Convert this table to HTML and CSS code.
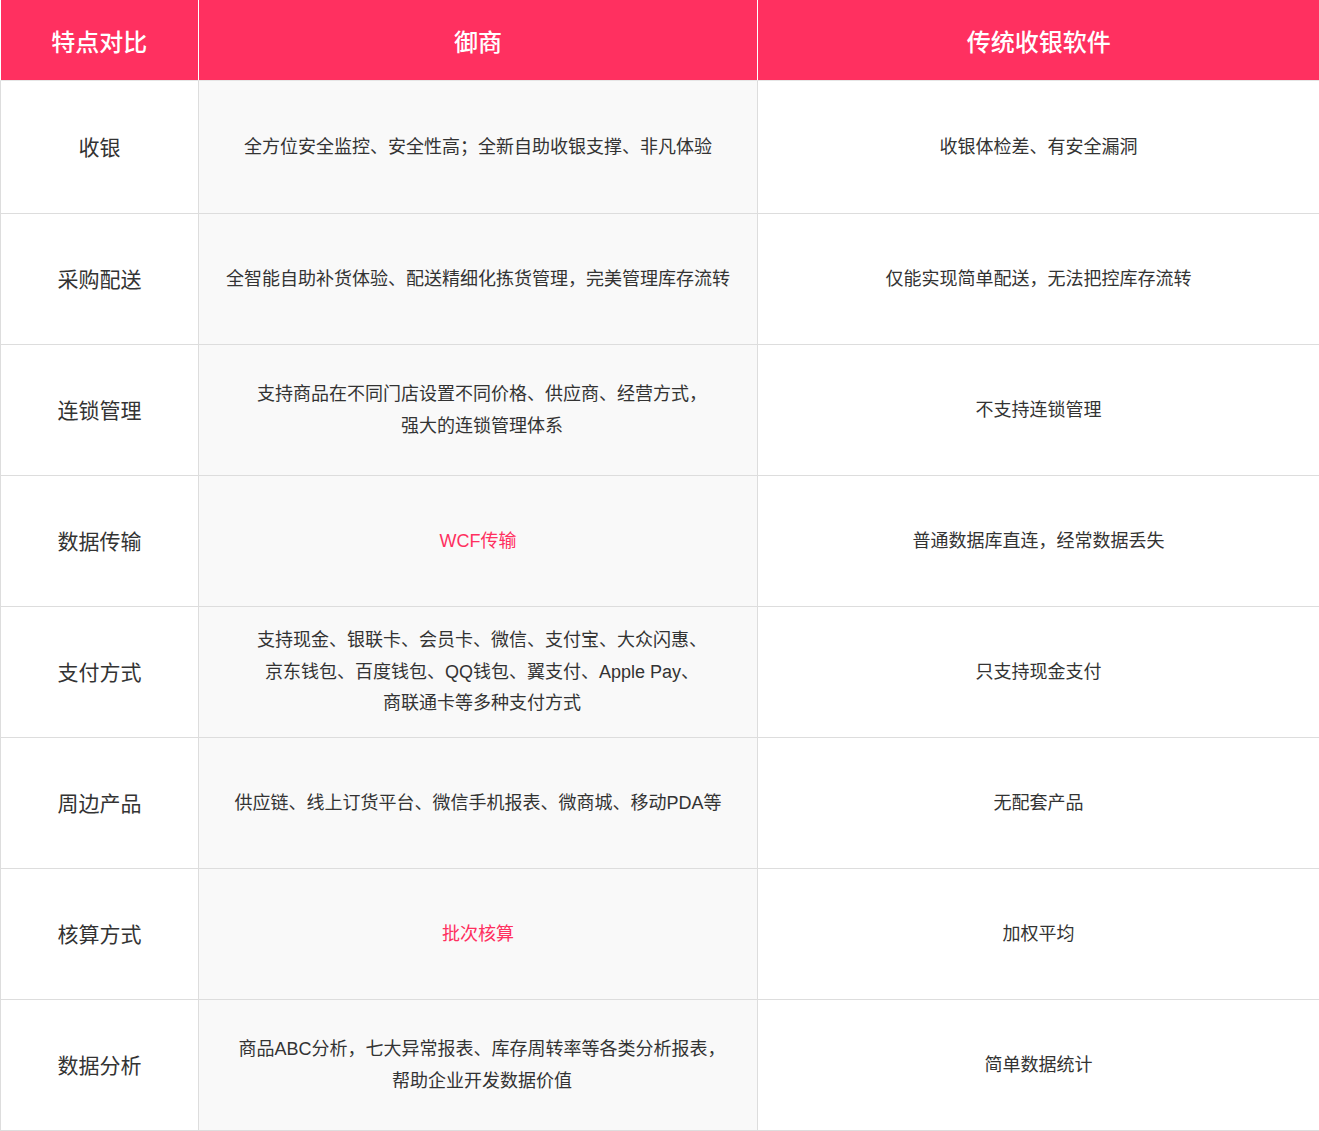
FILE: index.html
```html
<!DOCTYPE html>
<html lang="zh-CN">
<head>
<meta charset="utf-8">
<title>特点对比</title>
<link rel="stylesheet" href="styles.css">
</head>
<body>
<table class="compare">
  <colgroup>
    <col class="col-feature">
    <col class="col-ours">
    <col class="col-other">
  </colgroup>
  <thead>
    <tr>
      <th>特点对比</th>
      <th>御商</th>
      <th>传统收银软件</th>
    </tr>
  </thead>
  <tbody>
    <tr class="first">
      <td class="feature">收银</td>
      <td class="ours">全方位安全监控、安全性高；全新自助收银支撑、非凡体验</td>
      <td class="other">收银体检差、有安全漏洞</td>
    </tr>
    <tr>
      <td class="feature">采购配送</td>
      <td class="ours">全智能自助补货体验、配送精细化拣货管理，完美管理库存流转</td>
      <td class="other">仅能实现简单配送，无法把控库存流转</td>
    </tr>
    <tr>
      <td class="feature">连锁管理</td>
      <td class="ours multi">支持商品在不同门店设置不同价格、供应商、经营方式，<br>强大的连锁管理体系</td>
      <td class="other">不支持连锁管理</td>
    </tr>
    <tr>
      <td class="feature">数据传输</td>
      <td class="ours highlight">WCF传输</td>
      <td class="other">普通数据库直连，经常数据丢失</td>
    </tr>
    <tr>
      <td class="feature">支付方式</td>
      <td class="ours multi">支持现金、银联卡、会员卡、微信、支付宝、大众闪惠、<br>京东钱包、百度钱包、QQ钱包、翼支付、Apple Pay、<br>商联通卡等多种支付方式</td>
      <td class="other">只支持现金支付</td>
    </tr>
    <tr>
      <td class="feature">周边产品</td>
      <td class="ours">供应链、线上订货平台、微信手机报表、微商城、移动PDA等</td>
      <td class="other">无配套产品</td>
    </tr>
    <tr>
      <td class="feature">核算方式</td>
      <td class="ours highlight">批次核算</td>
      <td class="other">加权平均</td>
    </tr>
    <tr>
      <td class="feature">数据分析</td>
      <td class="ours multi">商品ABC分析，七大异常报表、库存周转率等各类分析报表，<br>帮助企业开发数据价值</td>
      <td class="other">简单数据统计</td>
    </tr>
  </tbody>
</table>
</body>
</html>
```

FILE: styles.css
```css
html, body {
  margin: 0;
  padding: 0;
  background: #ffffff;
}

body {
  font-family: "Liberation Sans", "Noto Sans CJK SC", sans-serif;
  color: #333333;
}

.compare {
  width: 1319px;
  border-collapse: collapse;
  table-layout: fixed;
}

.col-feature { width: 198px; }
.col-ours { width: 559px; }
.col-other { width: 562px; }

.compare th {
  height: 80px;
  padding: 0;
  background: #ff3060;
  color: #ffffff;
  font-size: 24px;
  font-weight: 500;
  text-align: center;
  vertical-align: middle;
  border-left: 1px solid #ffffff;
  border-bottom: 1px solid #e6e6e6;
}

.compare th:first-child {
  border-left: none;
}

.compare td {
  height: 129px;
  padding: 1px 8px 0;
  text-align: center;
  vertical-align: middle;
  border: 1px solid #dddddd;
  font-size: 18px;
  line-height: 31.5px;
  color: #333333;
}

.compare tr.first td {
  height: 131px;
}

.compare td.feature {
  font-size: 21px;
  color: #333333;
}

.compare td.ours {
  background: #f9f9f9;
}

.compare td.multi {
  padding-left: 16px;
  padding-right: 8px;
}

.compare td.highlight {
  color: #ff3060;
}
```
